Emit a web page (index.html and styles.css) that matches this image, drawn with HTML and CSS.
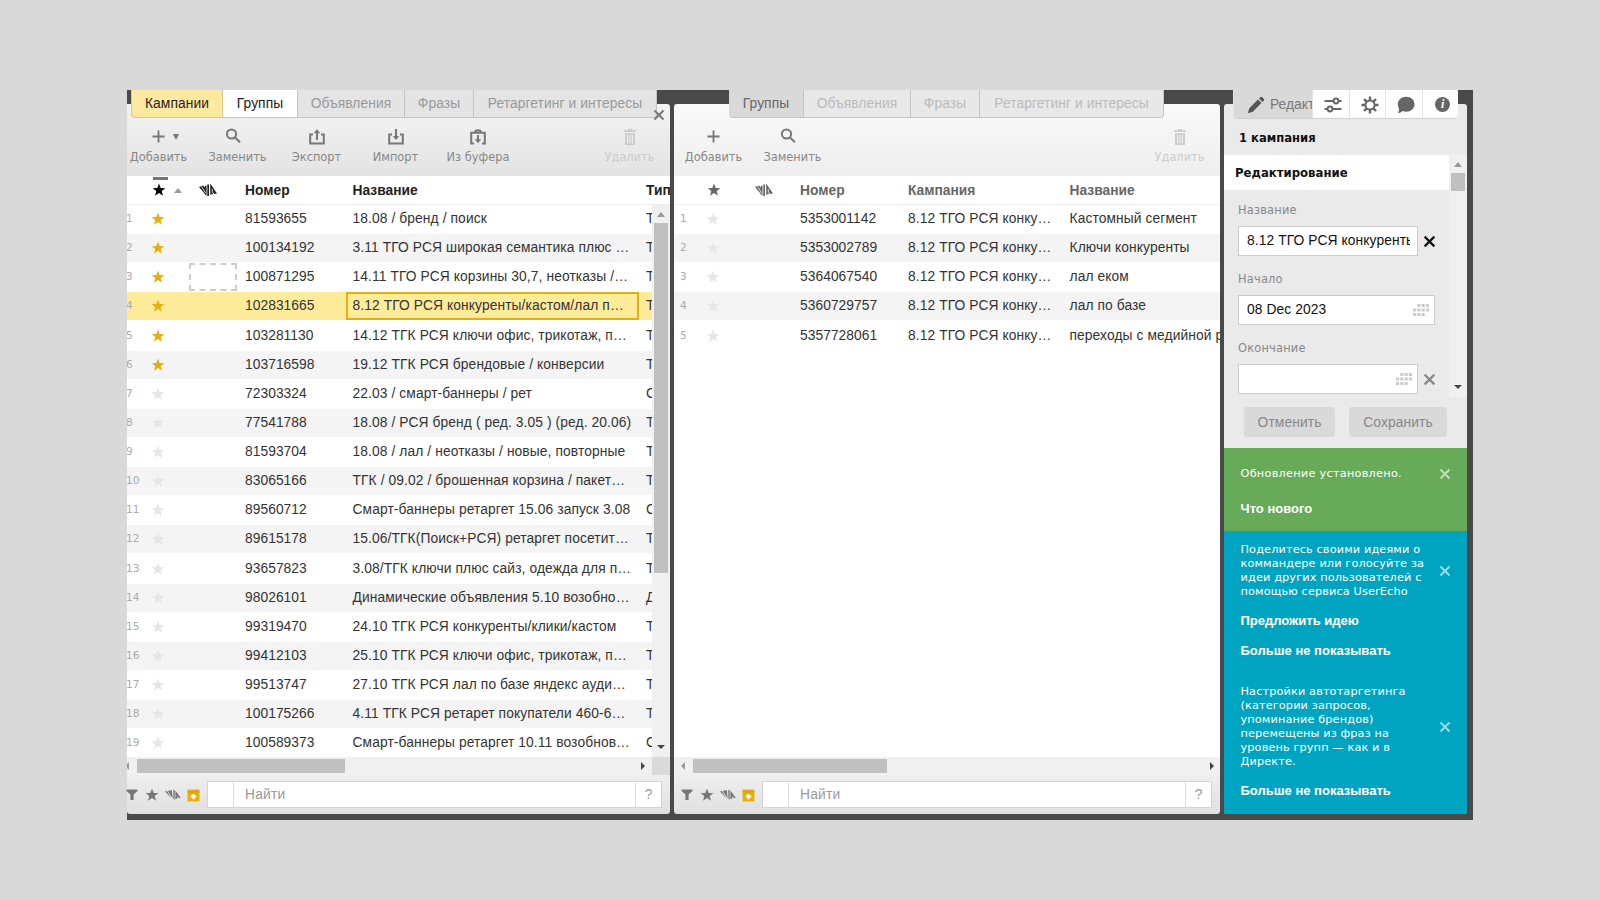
FILE: index.html
```
<!DOCTYPE html>
<html lang="ru">
<head>
  <meta charset="UTF-8">
  <meta name="viewport" content="width=device-width, initial-scale=1.0">
  <title>Директ Коммандер</title>
  <link rel="stylesheet" href="styles.css">
</head>
<body>

<svg class="sprite">
  <symbol id="star" viewBox="0 0 14 14"><path d="M7 .6l1.7 4.4 4.7.2-3.7 2.9 1.3 4.6L7 10.1l-4 2.6 1.3-4.6L.6 5.2l4.7-.2z"/></symbol>
  <symbol id="hatch" viewBox="0 0 18 14"><path d="M0 4l4-1.500 2 2V3l1.500-.5V13zM8.300 1.500H10V13H8.300zM11.200.5L18 10.500l-2.600.5-1-1.500-.6 1.500-2.600.8z"/><path class="cut" d="M2.500 3.500l4 6.500M13.300 6v4"/></symbol>
  <symbol id="hatch-small" viewBox="0 0 16 12"><path d="M0 2.500l2-.5 4.500 7.300zM2.800 2l4-1 .9 8.500zM8.300 1h1.400v10.200L8.300 9zM10.400 1.500l5.300 7.200-1.800.6-1.300-2-.4 2.200-1.800.7z"/></symbol>
  <symbol id="plus" viewBox="0 0 14 14"><path class="line" d="M7 .5v13M.5 7h13"/></symbol>
  <symbol id="search" viewBox="0 0 16 16"><circle class="line" cx="6.500" cy="6" r="4.600"/><path class="line" d="M10 9.500l5 4.800"/></symbol>
  <symbol id="export" viewBox="0 0 16 16"><path class="line" d="M4 5.500H1.200v9h13.600v-9H12M8 11V2"/><path d="M8 .3l3.200 4H4.800z"/></symbol>
  <symbol id="import" viewBox="0 0 16 16"><path class="line" d="M4 5.500H1.200v9h13.600v-9H12M8 0v7"/><path d="M8 11l3.200-4H4.800z"/></symbol>
  <symbol id="buffer" viewBox="0 0 16 16"><path class="line" d="M4 14.500H1.200V3.800h13.600v10.700H12M5 3.500Q5 1.200 8 1.200t3 2.300M8 6v5"/><path d="M8 14.300l3.200-4H4.800z"/></symbol>
  <symbol id="trash" viewBox="0 0 14 16"><path d="M1 1.200h4V0h4v1.200h4V3H1zM2 4.200h10V16H2z"/><path class="cut" d="M4.600 5.800v8.500M7 5.800v8.500M9.400 5.800v8.500"/></symbol>
  <symbol id="filter" viewBox="0 0 12 12"><path d="M.5.500h11v1.600L7.600 5.500V11H4.400V5.500L.5 2.100z"/></symbol>
  <symbol id="box" viewBox="0 0 12 12"><path d="M.5.500h11v11H.5z"/><path class="fold" d="M.5 2.700h11"/><path class="plus-cut" d="M6 4.500v5M3.500 7h5"/></symbol>
  <symbol id="cross" viewBox="0 0 12 12"><path class="line" d="M1.500 1.500l9 9M10.500 1.500l-9 9"/></symbol>
  <symbol id="calendar" viewBox="0 0 17 12"><path class="dots" d="M4.200 1.500h12.800M0 6h17M0 10.500h12.800"/></symbol>
  <symbol id="pencil" viewBox="0 0 18 18"><path d="M.8 17.200l1.500-5L11 3.500l3.500 3.500-8.700 8.700zM12 2.500l1.300-1.300q1-1 2 0l1.500 1.500q1 1 0 2L15.500 6z"/></symbol>
  <symbol id="sliders" viewBox="0 0 18 16"><path class="line" d="M.5 4h9M14.500 4h3M.5 12h3M8.500 12h9"/><circle class="line" cx="12" cy="4" r="2.400"/><circle class="line" cx="6" cy="12" r="2.400"/></symbol>
  <symbol id="gear" viewBox="0 0 18 18"><circle class="line" cx="9" cy="9" r="4.600"/><path class="teeth" d="M9 .5v3.500M9 14v3.500M.5 9H4M14 9h3.500M3 3l2.400 2.400M12.600 12.600L15 15M15 3l-2.400 2.400M5.400 12.600L3 15"/></symbol>
  <symbol id="bubble" viewBox="0 0 18 18"><path d="M9.200.8C14 .8 17.500 4 17.500 8.300S14 15.800 9.200 15.800q-2 0-3.500-.7Q4 17 .8 17.200 2.200 15.500 2 12.500.8 10.700.8 8.300C.8 4 4.400.8 9.200.8z"/></symbol>
</svg>

<div class="app">

  <section class="panel left">
    <div class="panel-head">
      <div class="tabs">
        <span class="tab campaigns">Кампании</span>
        <span class="tab active">Группы</span>
        <span class="tab ads">Объявления</span>
        <span class="tab phrases">Фразы</span>
        <span class="tab retarget">Ретаргетинг и интересы</span>
      </div>
      <svg class="panel-close"><use href="#cross"/></svg>
      <div class="toolbar">
        <div class="tool"><span class="tool-icon"><svg class="plus shift"><use href="#plus"/></svg><i class="caret"></i></span>Добавить</div>
        <div class="tool"><span class="tool-icon"><svg class="search"><use href="#search"/></svg></span>Заменить</div>
        <div class="tool"><span class="tool-icon"><svg><use href="#export"/></svg></span>Экспорт</div>
        <div class="tool"><span class="tool-icon"><svg><use href="#import"/></svg></span>Импорт</div>
        <div class="tool wide"><span class="tool-icon"><svg><use href="#buffer"/></svg></span>Из буфера</div>
        <div class="tool disabled"><span class="tool-icon"><svg><use href="#trash"/></svg></span>Удалить</div>
      </div>
    </div>
    <div class="grid-head">
      <span class="c-star sorted"><svg><use href="#star"/></svg><i class="sort"></i></span>
      <span class="c-mark"><svg><use href="#hatch"/></svg></span>
      <span class="c-id">Номер</span>
      <span class="c-name">Название</span>
      <span class="c-type">Тип</span>
    </div>
    <div class="grid-body">
      <div class="rows" id="campaigns"></div>
      <div class="vscroll"><i class="up"></i><i class="thumb"></i><i class="down"></i></div>
    </div>
    <div class="hscroll"><div class="track"><i class="prev"></i><i class="thumb"></i><i class="next"></i></div><div class="corner"></div></div>
    <div class="panel-foot">
      <svg class="f-filter"><use href="#filter"/></svg>
      <svg class="f-star"><use href="#star"/></svg>
      <svg class="f-hatch"><use href="#hatch-small"/></svg>
      <svg class="f-box"><use href="#box"/></svg>
      <div class="find"><span class="find-type"></span><span class="find-text">Найти</span><span class="find-help">?</span></div>
    </div>
  </section>

  <section class="panel middle">
    <div class="panel-head">
      <div class="tabs">
        <span class="tab active">Группы</span>
        <span class="tab ads">Объявления</span>
        <span class="tab phrases">Фразы</span>
        <span class="tab retarget">Ретаргетинг и интересы</span>
      </div>
      <div class="toolbar">
        <div class="tool"><span class="tool-icon"><svg class="plus"><use href="#plus"/></svg></span>Добавить</div>
        <div class="tool"><span class="tool-icon"><svg class="search"><use href="#search"/></svg></span>Заменить</div>
        <div class="tool disabled"><span class="tool-icon"><svg><use href="#trash"/></svg></span>Удалить</div>
      </div>
    </div>
    <div class="grid-head">
      <span class="c-star"><svg><use href="#star"/></svg></span>
      <span class="c-mark"><svg><use href="#hatch"/></svg></span>
      <span class="c-id">Номер</span>
      <span class="c-camp">Кампания</span>
      <span class="c-name">Название</span>
    </div>
    <div class="grid-body">
      <div class="rows" id="groups"></div>
    </div>
    <div class="hscroll"><div class="track"><i class="prev"></i><i class="thumb"></i><i class="next"></i></div></div>
    <div class="panel-foot">
      <svg class="f-filter"><use href="#filter"/></svg>
      <svg class="f-star"><use href="#star"/></svg>
      <svg class="f-hatch"><use href="#hatch-small"/></svg>
      <svg class="f-box"><use href="#box"/></svg>
      <div class="find"><span class="find-type"></span><span class="find-text">Найти</span><span class="find-help">?</span></div>
    </div>
  </section>

  <section class="panel side">
    <div class="side-tabs">
      <span class="edit"><svg><use href="#pencil"/></svg>Редакт</span>
      <span><svg><use href="#sliders"/></svg></span>
      <span><svg><use href="#gear"/></svg></span>
      <span><svg><use href="#bubble"/></svg></span>
      <span><b class="info">i</b></span>
    </div>
    <div class="side-title">1 кампания</div>
    <div class="side-body">
      <div class="form">
        <h3>Редактирование</h3>
        <label>Название</label>
        <div class="field"><div class="input short"><span>8.12 ТГО РСЯ конкуренты</span></div><svg class="clear dark"><use href="#cross"/></svg></div>
        <label>Начало</label>
        <div class="field"><div class="input"><span>08 Dec 2023</span><svg class="cal"><use href="#calendar"/></svg></div></div>
        <label>Окончание</label>
        <div class="field"><div class="input short"><span></span><svg class="cal"><use href="#calendar"/></svg></div><svg class="clear"><use href="#cross"/></svg></div>
      </div>
      <div class="vscroll"><i class="up"></i><i class="thumb"></i><i class="down"></i></div>
    </div>
    <div class="buttons"><span class="btn cancel">Отменить</span><span class="btn save">Сохранить</span></div>
    <div class="notice green">
      <div class="notice-row"><p>Обновление установлено.</p><svg><use href="#cross"/></svg></div>
      <b>Что нового</b>
    </div>
    <div class="notice blue">
      <div class="notice-row"><p>Поделитесь своими идеями о<br>коммандере или голосуйте за<br>идеи других пользователей с<br>помощью сервиса UserEcho</p><svg><use href="#cross"/></svg></div>
      <b>Предложить идею</b>
      <b>Больше не показывать</b>
      <div class="notice-row second"><p>Настройки автотаргетинга<br>(категории запросов,<br>упоминание брендов)<br>перемещены из фраз на<br>уровень групп — как и в<br>Директе.</p><svg><use href="#cross"/></svg></div>
      <b>Больше не показывать</b>
    </div>
  </section>

</div>

<script>
  var campaigns = [
    ['81593655', '18.08 / бренд / поиск', 'Т'],
    ['100134192', '3.11 ТГО РСЯ широкая семантика плюс …', 'Т'],
    ['100871295', '14.11 ТГО РСЯ корзины 30,7, неотказы /…', 'Т'],
    ['102831665', '8.12 ТГО РСЯ конкуренты/кастом/лал п…', 'Т'],
    ['103281130', '14.12 ТГК РСЯ ключи офис, трикотаж, п…', 'Т'],
    ['103716598', '19.12 ТГК РСЯ брендовые / конверсии', 'Т'],
    ['72303324', '22.03 / смарт-баннеры / рет', 'С'],
    ['77541788', '18.08 / РСЯ бренд ( ред. 3.05 ) (ред. 20.06)', 'Т'],
    ['81593704', '18.08 / лал / неотказы / новые, повторные', 'Т'],
    ['83065166', 'ТГК / 09.02 / брошенная корзина / пакет…', 'Т'],
    ['89560712', 'Смарт-баннеры ретаргет 15.06 запуск 3.08', 'С'],
    ['89615178', '15.06/ТГК(Поиск+РСЯ) ретаргет посетит…', 'Т'],
    ['93657823', '3.08/ТГК ключи плюс сайз, одежда для п…', 'Т'],
    ['98026101', 'Динамические объявления 5.10 возобно…', 'Д'],
    ['99319470', '24.10 ТГК РСЯ конкуренты/клики/кастом', 'Т'],
    ['99412103', '25.10 ТГК РСЯ ключи офис, трикотаж, п…', 'Т'],
    ['99513747', '27.10 ТГК РСЯ лал по базе яндекс ауди…', 'Т'],
    ['100175266', '4.11 ТГК РСЯ ретарет покупатели 460-6…', 'Т'],
    ['100589373', 'Смарт-баннеры ретаргет 10.11 возобнов…', 'С']
  ];

  var groups = [
    ['5353001142', 'Кастомный сегмент'],
    ['5353002789', 'Ключи конкуренты'],
    ['5364067540', 'лал еком'],
    ['5360729757', 'лал по базе'],
    ['5357728061', 'переходы с медийной рекламы']
  ];

  var star = '<svg><use href="#star"/></svg>';

  document.getElementById('campaigns').innerHTML = campaigns.map(function(row, i) {
    return `<div class="row ${i < 6 ? 'starred' : ''} ${i === 3 ? 'selected' : ''}">
      <span class="c-num">${i + 1}</span>
      <span class="c-star">${star}</span>
      <span class="c-mark ${i === 2 ? 'focus' : ''}"></span>
      <span class="c-id">${row[0]}</span>
      <span class="c-name">${row[1]}</span>
      <span class="c-type">${row[2]}</span>
    </div>`;
  }).join('');

  document.getElementById('groups').innerHTML = groups.map(function(row, i) {
    return `<div class="row">
      <span class="c-num">${i + 1}</span>
      <span class="c-star">${star}</span>
      <span class="c-mark"></span>
      <span class="c-id">${row[0]}</span>
      <span class="c-camp">8.12 ТГО РСЯ конку…</span>
      <span class="c-name">${row[1]}</span>
    </div>`;
  }).join('');
</script>

</body>
</html>
```
FILE: styles.css
```
* {
  box-sizing: border-box;
}

body {
  margin: 0;
  padding: 90px 127px 0;
  height: 900px;
  overflow: hidden;
  background-color: #d9d9d9;
  font-family: "Liberation Sans", Arial, sans-serif;
  font-size: 13.8px;
  color: #333;
}

svg {
  flex: none;
  display: block;
  fill: currentColor;
}

i {
  flex: none;
  display: block;
}

.sprite {
  display: none;
}

.line, .cut, .plus-cut, .dots, .teeth, .fold {
  fill: none;
  stroke: currentColor;
  stroke-width: 2;
}

.cut {
  stroke: #fff;
  stroke-width: 0.8;
}

.fold {
  stroke: #c99a08;
  stroke-width: 0.8;
}

.plus-cut {
  stroke: #fff;
  stroke-width: 1.8;
}

.dots {
  stroke-width: 3;
  stroke-dasharray: 3.2 1.1;
}

.teeth {
  stroke-width: 2.4;
}

.app {
  display: flex;
  gap: 4px;
  width: 1346px;
  height: 730px;
  padding: 14px 6px 6px 0;
  background-color: #494949;
}

.panel {
  display: flex;
  flex-direction: column;
  height: 710px;
}

.left {
  width: 543px;
}

.middle {
  width: 546px;
}

.side {
  width: 243px;
  background-color: #eaeaea;
  border-radius: 3px;
}

/* tabs and toolbar */
.panel-head {
  display: flex;
  flex-direction: column;
  position: relative;
  height: 72px;
  border-radius: 3px 3px 0 0;
  background: linear-gradient(#f3f3f3, #e3e3e3);
}

.left .panel-head {
  border-top-left-radius: 0;
}

.middle .panel-head {
  background: linear-gradient(#fafafa, #eee);
}

.tabs {
  display: flex;
  flex: none;
  width: 526px;
  height: 28px;
  margin: -14px 0 0 4px;
}

.middle .tabs {
  width: 435px;
  margin-left: 55px;
}

.tab {
  display: flex;
  align-items: center;
  justify-content: center;
  padding-bottom: 1px;
  border-right: 1px solid #c4c4c4;
  border-bottom: 1px solid #c4c4c4;
  background-color: #e4e4e4;
  color: #999;
  letter-spacing: 0.08px;
  white-space: nowrap;
}

.tab.campaigns {
  width: 92px;
  background-color: #ffe9a0;
  border: 1px solid #d9c98b;
  border-top: 0;
  border-radius: 0 0 0 4px;
  color: #222;
}

.tab.active {
  width: 75px;
  background-color: #fff;
  color: #222;
}

.tab.ads {
  width: 107px;
}

.tab.phrases {
  width: 69px;
}

.tab.retarget {
  flex: 1;
  border-radius: 0 0 4px 0;
}

.middle .tab {
  background-color: #e8e8e8;
  color: #bbb;
}

.middle .tab.active {
  background-color: #d9d9d9;
  border-radius: 0 0 0 4px;
  color: #666;
}

.panel-close {
  position: absolute;
  left: 526px;
  top: 5px;
  width: 12px;
  height: 12px;
  color: #777;
}

.toolbar {
  display: flex;
  padding-right: 1px;
  height: 58px;
}

.left .toolbar {
  margin-left: -8px;
}

.tool {
  width: 79px;
  padding-top: 9px;
  text-align: center;
  font: 11.4px "DejaVu Sans", Verdana, sans-serif;
  color: #888;
}

.tool.wide {
  width: 86px;
}

.tool-icon {
  display: flex;
  justify-content: center;
  align-items: center;
  gap: 8px;
  height: 19px;
  margin-bottom: 4px;
  color: #777;
}

.tool-icon svg {
  width: 16px;
  height: 16px;
}

.tool-icon .plus {
  width: 13px;
  height: 13px;
}

.tool-icon .shift {
  margin-left: 14px;
}

.tool-icon .search {
  margin: -2px 10px 0 0;
}

.caret {
  border: 3.5px solid transparent;
  border-top: 6px solid #777;
  border-bottom: 0;
}

.tool.disabled {
  margin-left: auto;
  color: #ccc;
}

.disabled .tool-icon {
  color: #ccc;
}

/* grid */
.grid-head {
  display: flex;
  align-items: center;
  height: 29px;
  overflow: hidden;
  background-color: #fff;
  border-bottom: 1px solid #eee;
  font-weight: bold;
  color: #222;
}

.middle .grid-head {
  color: #666;
}

.grid-head svg {
  width: 14px;
  height: 14px;
}

.grid-head .c-mark svg {
  width: 18px;
}

.grid-head .c-star {
  display: flex;
  align-items: center;
  width: 62px;
  height: 28px;
  padding-left: 25px;
}

.middle .grid-head .c-star {
  padding-left: 33px;
  width: 71px;
}

.grid-head .sorted {
  background: linear-gradient(#777, #777) 26px 1px / 15px 3px no-repeat;
  color: #000;
}

.sort {
  margin-left: 8px;
  border: 4px solid transparent;
  border-bottom: 5px solid #999;
  border-top: 0;
}

.grid-head .c-mark {
  padding-left: 10px;
}

.grid-body {
  display: flex;
  height: 552px;
  overflow: hidden;
  background-color: #fff;
}

.rows {
  flex: 1;
  overflow: hidden;
}

.row {
  display: flex;
  align-items: center;
  height: 28px;
  margin-bottom: 1.14px;
}

.row:nth-child(even) {
  background-color: #f4f4f4;
}

.row.selected {
  background-color: #ffec9b;
}

.row span, .grid-head span {
  flex: none;
  white-space: nowrap;
}

.c-num {
  width: 24px;
  margin-left: -1px;
  padding-bottom: 2px;
  font: 10.5px "DejaVu Sans", Verdana, sans-serif;
  color: #aaa;
}

.middle .c-num {
  width: 26px;
  margin-left: 6px;
}

.row .c-star {
  width: 39px;
  padding-left: 1px;
  color: #e6e6e6;
}

.middle .row .c-star {
  padding-left: 0;
}

.row .c-star svg {
  width: 14px;
  height: 14px;
}

.starred .c-star {
  color: #e3b010;
}

.c-mark {
  width: 48px;
  height: 28px;
  display: flex;
  align-items: center;
}

.focus {
  border: 2px dashed #ccc;
}

.c-id {
  width: 109px;
  padding-left: 8px;
  letter-spacing: 0.05px;
}

/* every cell shares one line height, so the texts of a row stay level */
.row .c-id, .row .c-type, .row .c-camp, .row .c-name {
  height: 28px;
  line-height: 28px;
}

.left .c-name {
  width: 293px;
  padding-left: 6.5px;
}

.row .c-name, .row .c-camp {
  letter-spacing: 0.1px;
}

.left .row.selected .c-name {
  line-height: 24px;
  padding-left: 4.5px;
  border: 2px solid #e3b010;
}

.c-type {
  padding-left: 7px;
}

.middle .c-mark {
  width: 47px;
}

.middle .c-id {
  width: 116px;
}

.middle .c-camp {
  width: 161.5px;
}

/* scrollbars */
.vscroll {
  display: flex;
  flex-direction: column;
  align-items: center;
  flex: none;
  width: 18px;
  background-color: #f0f0f0;
}

.up {
  margin: 7px 0 6px;
  border: 4px solid transparent;
  border-bottom: 5px solid #999;
  border-top: 0;
}

.down {
  margin: auto 0 8px;
  border: 4px solid transparent;
  border-top: 4px solid #444;
  border-bottom: 0;
}

.vscroll .thumb {
  width: 14px;
  height: 350px;
  background-color: #c0c0c0;
}

.hscroll {
  display: flex;
  height: 18px;
}

.track {
  display: flex;
  align-items: center;
  flex: 1;
  padding-right: 7px;
  overflow: hidden;
  background-color: #f0f0f0;
}

.corner {
  width: 18px;
  background-color: #dadada;
}

.prev {
  margin: 0 8px 0 -2px;
  border: 4px solid transparent;
  border-right: 4px solid #999;
  border-left: 0;
}

.middle .prev {
  margin-left: 7px;
}

.next {
  margin-left: auto;
  border: 4px solid transparent;
  border-left: 4px solid #444;
  border-right: 0;
}

.middle .track {
  padding-right: 6px;
}

.track .thumb {
  width: 208px;
  height: 14px;
  background-color: #c0c0c0;
}

.middle .track .thumb {
  width: 194px;
}

/* footer */
.panel-foot {
  display: flex;
  align-items: center;
  height: 39px;
  padding: 0 8px 0 0;
  border-radius: 0 0 3px 3px;
  background: linear-gradient(#eee, #e0e0e0);
  color: #777;
}

.middle .panel-foot {
  padding: 0 8px 0 7px;
}

.f-filter {
  width: 12px;
  height: 12px;
  margin-left: -1px;
}

.middle .f-filter {
  margin-left: 0;
}

.f-star {
  width: 14px;
  height: 14px;
  margin-left: 7px;
}

.f-hatch {
  width: 16px;
  height: 12px;
  margin-left: 6px;
}

.f-box {
  width: 13px;
  height: 13px;
  margin: 1px 7px 0 6px;
  color: #e3b010;
}

.find {
  display: flex;
  flex: 1;
  height: 27px;
  border: 1px solid #d4d4d4;
  background-color: #fff;
  line-height: 26px;
  color: #999;
}

.find-type {
  width: 26px;
  border-right: 1px solid #ddd;
}

.find-text {
  flex: 1;
  padding-left: 11px;
  letter-spacing: 0.2px;
}

.find-help {
  width: 26px;
  border-left: 1px solid #ddd;
  text-align: center;
}

/* side panel */
.side-tabs {
  display: flex;
  flex: none;
  width: 225px;
  height: 29px;
  margin: -14px 0 0 9px;
  border-radius: 0 0 4px 4px;
  overflow: hidden;
  background-color: #fff;
  border-bottom: 1px solid #d0d0d0;
  color: #666;
}

.side-tabs span {
  flex: 1;
  display: flex;
  align-items: center;
  justify-content: center;
  padding: 1px 0 0 5px;
  border-left: 1px solid #e4e4e4;
}

.side-tabs .edit {
  flex: none;
  width: 79px;
  justify-content: flex-start;
  gap: 5px;
  padding-left: 13px;
  overflow: hidden;
  background-color: #d9d9d9;
  color: #777;
}

.side-tabs svg {
  width: 18px;
  height: 18px;
}

.edit svg {
  color: #555;
}

.info {
  width: 15px;
  height: 15px;
  border-radius: 8px;
  background-color: #666;
  color: #fff;
  font: italic bold 12px/15px "Liberation Serif", serif;
  text-align: center;
}

.side-title {
  height: 36px;
  padding: 12px 0 0 15px;
  font: bold 11.6px "DejaVu Sans", Verdana, sans-serif;
  color: #111;
}

.side-body {
  display: flex;
  height: 242px;
}

.form {
  width: 225px;
}

.form h3 {
  height: 35px;
  margin: 0 0 12px;
  padding-left: 11px;
  background-color: #fff;
  font: bold 11.7px/37px "DejaVu Sans", Verdana, sans-serif;
  color: #111;
}

.form label {
  display: block;
  height: 24px;
  padding-left: 14px;
  font: 11.4px/17px "DejaVu Sans", Verdana, sans-serif;
  letter-spacing: 0.2px;
  color: #888;
}

.field {
  display: flex;
  align-items: center;
  gap: 5px;
  height: 30px;
  margin: 0 0 15px 14px;
}

.input {
  display: flex;
  align-items: center;
  width: 197px;
  height: 30px;
  padding: 0 4px 0 8px;
  border: 1px solid #ccc;
  background-color: #fff;
  line-height: 30px;
  color: #111;
}

.input span {
  flex: 1;
  overflow: hidden;
  white-space: nowrap;
  letter-spacing: 0.1px;
}

.input.short {
  width: 180px;
}

.input:has(span:only-child) {
  padding-right: 7px;
}

.cal {
  width: 17px;
  height: 12px;
  color: #ccc;
}

.clear {
  width: 13px;
  height: 13px;
  color: #888;
}

.clear.dark {
  color: #111;
}

.side .vscroll .thumb {
  height: 18px;
}

.buttons {
  display: flex;
  gap: 14px;
  height: 51px;
  padding: 10px 0 0 20px;
}

.btn {
  width: 91px;
  height: 30px;
  border-radius: 3px;
  background-color: #d9d9d9;
  line-height: 31px;
  text-align: center;
  letter-spacing: 0.1px;
  color: #888;
}

.btn.save {
  width: 98px;
}

.notice {
  padding: 19px 16px 0 16.5px;
  font: 11.3px/14px "DejaVu Sans", Verdana, sans-serif;
  letter-spacing: 0.12px;
  color: #fff;
}

.green {
  height: 83px;
  background-color: #67aa58;
  letter-spacing: 0.25px;
}

.blue {
  flex: 1;
  padding-top: 12px;
  border-radius: 0 0 3px 3px;
  background-color: #00a4c1;
}

.notice-row {
  display: flex;
  align-items: center;
  justify-content: space-between;
  margin-bottom: 14px;
}

.notice p {
  margin: 0;
  white-space: nowrap;
}

.notice-row svg {
  width: 12px;
  height: 12px;
  opacity: 0.6;
}

.notice b {
  display: block;
  height: 30px;
  font: bold 13px/16px "Liberation Sans", Arial, sans-serif;
  letter-spacing: 0;
}

.green b {
  padding-top: 6px;
}

.second {
  margin-top: 12px;
}
```
